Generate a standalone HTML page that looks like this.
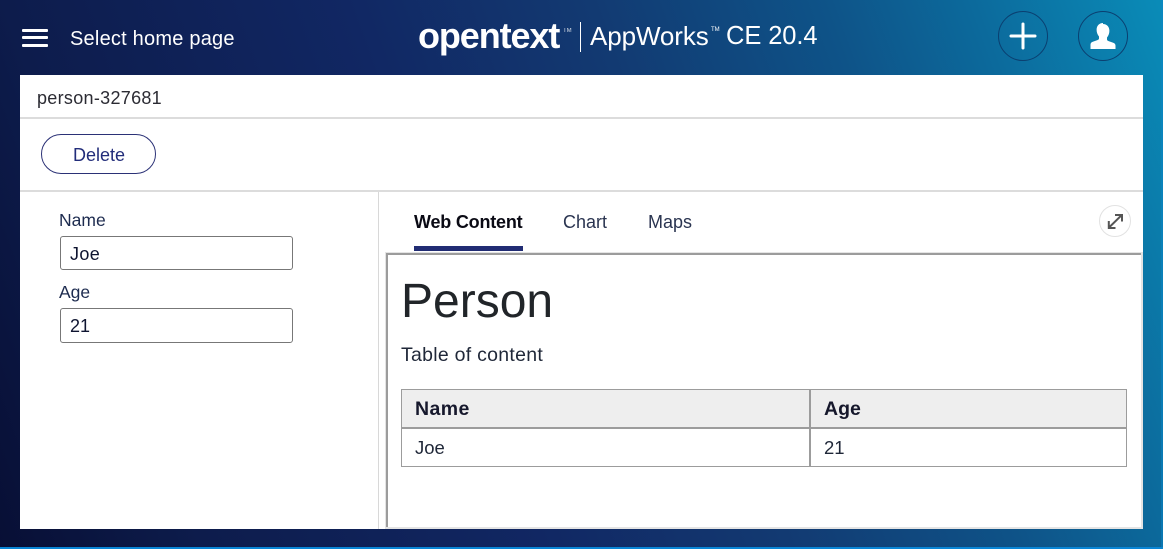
<!DOCTYPE html>
<html>
<head>
<meta charset="utf-8">
<style>
html,body{margin:0;padding:0;width:1163px;height:549px;overflow:hidden;font-family:"Liberation Sans",sans-serif;}
.abs,.t{position:absolute;}
.t{white-space:nowrap;line-height:1;}
#bg{position:absolute;left:0;top:0;width:1163px;height:549px;background:linear-gradient(70deg,#080f35 0%,#0d1c4c 15%,#112763 40%,#123a72 58%,#0e5388 75%,#0c6a9c 86%,#0a8cb8 100%);overflow:hidden;}
.logo{color:#fff;}
</style>
</head>
<body>
<div id="bg"></div>
<div class="abs" style="left:0;top:547px;width:1163px;height:2px;background:#0a86d6"></div>
<div class="abs" style="left:1161px;top:0;width:2px;height:549px;background:#0a86c8;opacity:.5"></div>

<div class="abs" style="left:22px;top:29px;width:26px;height:3px;background:#fff;border-radius:1px"></div>
<div class="abs" style="left:22px;top:36px;width:26px;height:3px;background:#fff;border-radius:1px"></div>
<div class="abs" style="left:22px;top:44px;width:26px;height:3px;background:#fff;border-radius:1px"></div>
<div class="t" style="left:70px;top:29px;font-size:20px;color:#fff;letter-spacing:.22px;">Select home page</div>

<div class="t logo" style="left:418px;top:18px;font-size:36px;font-weight:bold;letter-spacing:-1.100px;">opentext</div>
<div class="t logo" style="left:563px;top:28px;font-size:6px;opacity:.8">TM</div>
<div class="abs" style="left:580px;top:22px;width:1px;height:30px;background:#fff"></div>
<div class="t logo" style="left:590px;top:23px;font-size:26px;letter-spacing:-.1px;">AppWorks</div>
<div class="t logo" style="left:711px;top:27px;font-size:6px;">TM</div>
<div class="t logo" style="left:726px;top:24px;font-size:25.500px;letter-spacing:-.1px;">CE 20.4</div>

<svg class="abs" style="left:990px;top:4px" width="150" height="64" viewBox="0 0 150 64">
<circle cx="33" cy="32" r="24.500" fill="none" stroke="#0b3f70" stroke-width="1"/>
<circle cx="113" cy="32" r="24.500" fill="none" stroke="#0b3f70" stroke-width="1"/>
<path d="M21 32H45M33 20V44" stroke="#fff" stroke-width="3" stroke-linecap="round" fill="none"/>
<path d="M113 19c-3.800 0-6.400 2.800-6.400 6.800 0 2.800 1 5 2.400 6.700v2c0 .8-.6 1.200-1.600 1.600l-4.600 1.700c-1.600.6-2.300 1.400-2.300 3V45h25v-3.200c0-1.600-.7-2.400-2.300-3l-4.600-1.700c-1-.4-1.600-.8-1.600-1.600v-2c1.400-1.700 2.400-3.900 2.400-6.700 0-4-2.600-6.800-6.400-6.800z" fill="#fff"/>
</svg>

<div class="abs" style="left:20px;top:75px;width:1123px;height:454px;background:#fff;"></div>
<div class="abs" style="left:20px;top:117px;width:1123px;height:2px;background:#dcdcdc"></div>
<div class="abs" style="left:20px;top:190px;width:1123px;height:2px;background:#dcdcdc"></div>
<div class="abs" style="left:378px;top:192px;width:1px;height:337px;background:#d8d8d8"></div>
<div class="t" style="left:37px;top:89px;font-size:18px;color:#2b2b33;letter-spacing:.3px;">person-327681</div>

<div class="abs" style="left:41px;top:134px;width:113px;height:38px;border:1px solid #2b3176;border-radius:20px;"></div>
<div class="t" style="left:73px;top:146px;font-size:18px;color:#222d7a;">Delete</div>

<div class="t" style="left:59px;top:212px;font-size:17.500px;color:#1d2b4f;">Name</div>
<div class="abs" style="left:60px;top:236px;width:231px;height:32px;border:1px solid #777;border-radius:3px;"></div>
<div class="t" style="left:70px;top:245px;font-size:18px;color:#0e1430;letter-spacing:.4px;">Joe</div>
<div class="t" style="left:59px;top:284px;font-size:17.500px;color:#1d2b4f;">Age</div>
<div class="abs" style="left:60px;top:308px;width:231px;height:33px;border:1px solid #777;border-radius:3px;"></div>
<div class="t" style="left:70px;top:317px;font-size:18px;color:#0e1430;">21</div>

<div class="t" style="left:414px;top:213px;font-size:18px;font-weight:bold;color:#0a0a14;letter-spacing:-.2px;">Web Content</div>
<div class="abs" style="left:414px;top:246px;width:109px;height:5px;background:#212c73"></div>
<div class="t" style="left:563px;top:213px;font-size:18px;color:#2a3450;">Chart</div>
<div class="t" style="left:648px;top:213px;font-size:18px;color:#2a3450;">Maps</div>

<svg class="abs" style="left:1098px;top:204px" width="36" height="36" viewBox="0 0 36 36">
<circle cx="17" cy="17" r="15.500" fill="#fff" stroke="#e2e2e2" stroke-width="1"/>
<path d="M11 23.500L24 10.800M17 11H24V17.500M10.800 17V24H17.500" fill="none" stroke="#555" stroke-width="2"/>
</svg>

<div class="abs" style="left:385px;top:252px;width:758px;height:277px;background:#e4e4e4"></div>
<div class="abs" style="left:386px;top:253px;width:755px;height:274px;background:#fff;border-top:2px solid #9c9c9c;border-left:2px solid #9c9c9c;box-sizing:border-box;"></div>

<div class="t" style="left:401px;top:278px;font-size:48px;color:#212529;">Person</div>
<div class="t" style="left:401px;top:346px;font-size:19.500px;color:#1f2738;letter-spacing:.27px;">Table of content</div>

<div class="abs" style="left:401px;top:389px;width:726px;height:78px;border:1px solid #9c9c9c;box-sizing:border-box;"></div>
<div class="abs" style="left:402px;top:390px;width:724px;height:37px;background:#eeeeee"></div>
<div class="abs" style="left:402px;top:427px;width:724px;height:2px;background:#9c9c9c"></div>
<div class="abs" style="left:809px;top:390px;width:2px;height:76px;background:#9c9c9c"></div>
<div class="t" style="left:415px;top:400px;font-size:19.500px;font-weight:bold;color:#16182c;letter-spacing:.4px;">Name</div>
<div class="t" style="left:824px;top:400px;font-size:19.500px;font-weight:bold;color:#16182c;">Age</div>
<div class="t" style="left:415px;top:439px;font-size:18.500px;color:#1f2738;">Joe</div>
<div class="t" style="left:824px;top:439px;font-size:18.500px;color:#1f2738;">21</div>
</body>
</html>
